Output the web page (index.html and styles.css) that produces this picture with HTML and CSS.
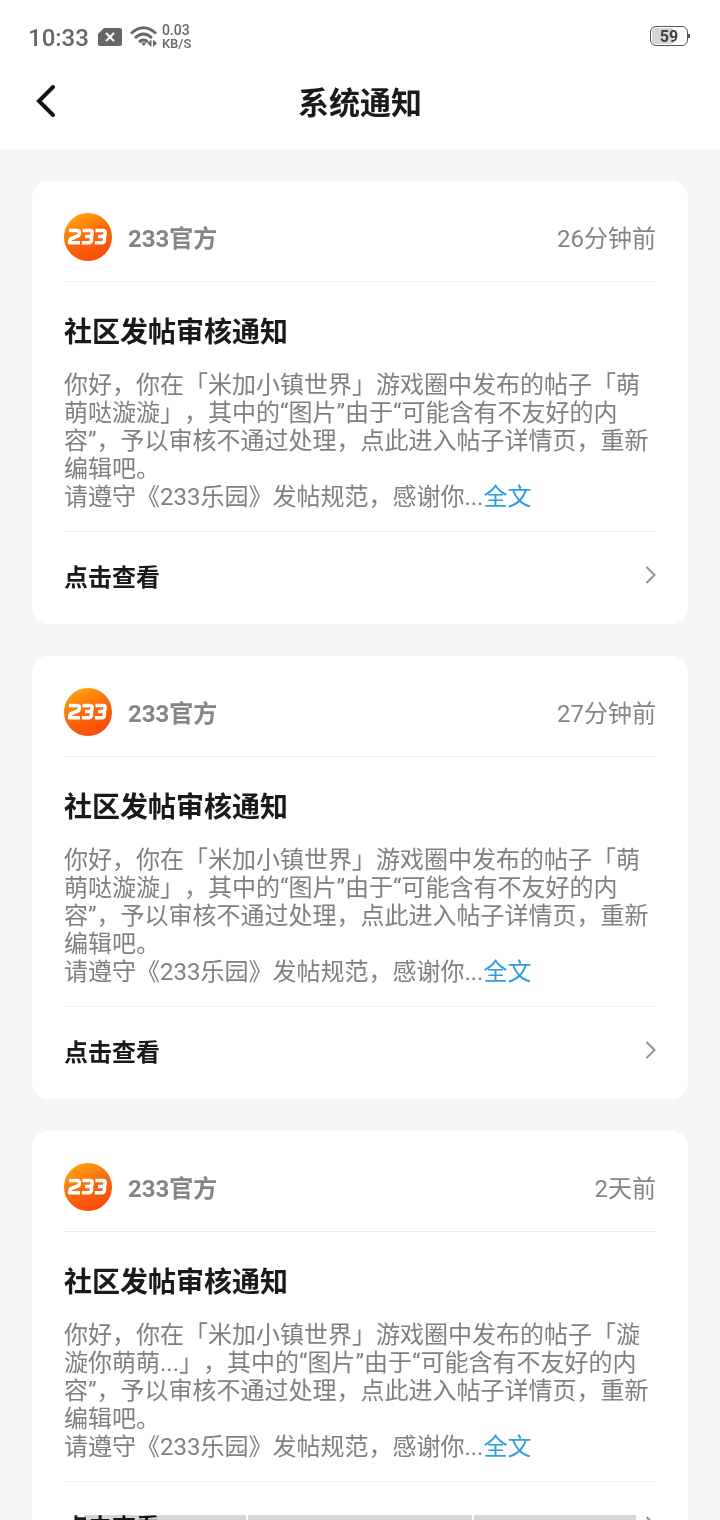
FILE: index.html
```html
<!DOCTYPE html>
<html lang="zh-CN">
<head>
<meta charset="utf-8">
<meta name="viewport" content="width=device-width, initial-scale=1">
<title>系统通知</title>
<link rel="stylesheet" href="styles.css">
</head>
<body>
<svg class="defs" width="0" height="0" aria-hidden="true">
  <defs>
    <linearGradient id="sun" x1="0.2" y1="0" x2="0.7" y2="1">
      <stop offset="0" stop-color="#ffa80f"/>
      <stop offset="0.5" stop-color="#fb6a0c"/>
      <stop offset="1" stop-color="#f9480a"/>
    </linearGradient>
    <symbol id="logo" viewBox="0 0 48 48">
      <circle cx="24" cy="24" r="24" fill="url(#sun)"/>
      <g fill="none" stroke="#fff" stroke-width="3.600" stroke-linejoin="round">
        <path d="M5 17.500H13q2.500 0 2.300 2.300l-.1 1.200q-.2 1.600-2 2.200L7.500 25.500q-1.700.7-1.900 4.300H16"/>
        <path d="M18.500 17.500h7.500q2.300 0 2.100 2.200l-.1 1.400q-.2 2.400-2.500 2.400H21M25.500 23.500q2.200 0 2 2.300l-.1 1.600q-.2 2.400-2.600 2.400h-7"/>
        <path d="M31.500 17.500h7.500q2.300 0 2.100 2.200l-.1 1.400q-.2 2.400-2.500 2.400H34M38.500 23.500q2.200 0 2 2.300l-.1 1.600q-.2 2.400-2.600 2.400h-7"/>
      </g>
    </symbol>
    <symbol id="next" viewBox="0 0 12 20">
      <path d="M2.500 2l8 8-8 8" fill="none" stroke="#929292" stroke-width="2"/>
    </symbol>
  </defs>
</svg>
<div class="app">
  <header class="top">
    <div class="status">
      <span class="clock">10:33</span>
      <svg class="sim" viewBox="0 0 24 18" aria-hidden="true">
        <path d="M6 0h16q2 0 2 2v14q0 2-2 2H2q-2 0-2-2V6z" fill="#666"/>
        <path d="M8 5l8 8M16 5l-8 8" stroke="#fff" stroke-width="2"/>
      </svg>
      <svg class="wifi" viewBox="0 0 28 22" aria-hidden="true">
        <g fill="none" stroke="#666" stroke-width="2.700">
          <path d="M1 7.500q12.500-11.500 25 0"/>
          <path d="M5 12q8.500-8 17 0"/>
          <path d="M9 16q4.500-4 9 0"/>
        </g>
        <path d="M11 16.500h5.500l-2.700 3.500zM21.500 13.500v7.500l-4-3.700zM23 13.500v7.500l4-3.700z" fill="#666"/>
      </svg>
      <span class="speed"><span class="rate">0.03</span><span>KB/S</span></span>
      <span class="battery">59</span>
    </div>
    <nav class="bar">
      <button class="back" type="button" aria-label="返回">
        <svg viewBox="0 0 20 32" aria-hidden="true"><path d="M17 2L3 16l14 14" fill="none" stroke="#151515" stroke-width="4" stroke-linecap="round"/></svg>
      </button>
      <h1 class="heading">系统通知</h1>
    </nav>
  </header>
  <main class="list">
    <article class="card">
      <div class="sender">
        <svg class="avatar" aria-hidden="true"><use href="#logo"/></svg>
        <span class="name">233官方</span>
        <time class="time">26分钟前</time>
      </div>
      <div class="content">
        <h2 class="title">社区发帖审核通知</h2>
        <p class="text">你好，你在「米加小镇世界」游戏圈中发布的帖子「萌萌哒漩漩」，其中的“图片”由于“可能含有不友好的内容”，予以审核不通过处理，点此进入帖子详情页，重新编辑吧。<br>请遵守《233乐园》发帖规范，感谢你...<a class="more" href="#">全文</a></p>
      </div>
      <a class="view" href="#"><span>点击查看</span><svg class="next" aria-hidden="true"><use href="#next"/></svg></a>
    </article>
    <article class="card">
      <div class="sender">
        <svg class="avatar" aria-hidden="true"><use href="#logo"/></svg>
        <span class="name">233官方</span>
        <time class="time">27分钟前</time>
      </div>
      <div class="content">
        <h2 class="title">社区发帖审核通知</h2>
        <p class="text">你好，你在「米加小镇世界」游戏圈中发布的帖子「萌萌哒漩漩」，其中的“图片”由于“可能含有不友好的内容”，予以审核不通过处理，点此进入帖子详情页，重新编辑吧。<br>请遵守《233乐园》发帖规范，感谢你...<a class="more" href="#">全文</a></p>
      </div>
      <a class="view" href="#"><span>点击查看</span><svg class="next" aria-hidden="true"><use href="#next"/></svg></a>
    </article>
    <article class="card">
      <div class="sender">
        <svg class="avatar" aria-hidden="true"><use href="#logo"/></svg>
        <span class="name">233官方</span>
        <time class="time">2天前</time>
      </div>
      <div class="content">
        <h2 class="title">社区发帖审核通知</h2>
        <p class="text">你好，你在「米加小镇世界」游戏圈中发布的帖子「漩漩你萌萌...」，其中的“图片”由于“可能含有不友好的内容”，予以审核不通过处理，点此进入帖子详情页，重新编辑吧。<br>请遵守《233乐园》发帖规范，感谢你...<a class="more" href="#">全文</a></p>
      </div>
      <a class="view" href="#"><span>点击查看</span><svg class="next" aria-hidden="true"><use href="#next"/></svg></a>
    </article>
  </main>
  <div class="gestures" aria-hidden="true"><i></i><i></i><i></i></div>
</div>
</body>
</html>
```

FILE: styles.css
```css
* {
  box-sizing: border-box;
}

body {
  margin: 0;
  background: #f5f5f7;
  font-family: Roboto, "Noto Sans CJK SC", sans-serif;
  font-size: 24px;
  color: #1a1a1a;
  text-spacing-trim: space-all;
}

h1, h2, p {
  margin: 0;
}

a {
  color: inherit;
  text-decoration: none;
}

.defs {
  position: absolute;
}

.app {
  position: relative;
  display: flex;
  flex-direction: column;
  height: 100vh;
  overflow: hidden;
}

.top {
  flex: none;
  background: #fff;
}

.status {
  display: flex;
  align-items: center;
  height: 56px;
  padding: 18px 32px 0 28px;
  color: #666;
}

.clock {
  padding-top: 2px;
  font-size: 24px;
  font-weight: 500;
  line-height: 38px;
}

.sim {
  width: 24px;
  height: 18px;
  margin-left: 9px;
}

.wifi {
  width: 28px;
  height: 22px;
  margin-left: 8px;
}

.speed {
  display: flex;
  flex-direction: column;
  margin-left: 4px;
  font-size: 13px;
  font-weight: 500;
  line-height: 13px;
}

.rate {
  font-size: 14px;
}

.battery {
  position: relative;
  width: 38px;
  height: 20px;
  margin-bottom: 2px;
  margin-left: auto;
  border: 1px solid #555;
  border-radius: 6px;
  background: linear-gradient(90deg, #d4d4d4 60%, #fff 60%);
  box-shadow: inset 0 0 0 1px #fff;
  color: #444;
  font-size: 16px;
  font-weight: 700;
  line-height: 20px;
  text-align: center;
}

.battery::after {
  content: "";
  position: absolute;
  top: 7px;
  right: -3px;
  width: 2px;
  height: 4px;
  background: #555;
}

.bar {
  display: grid;
  grid-template-columns: 60px 1fr 60px;
  align-items: center;
  height: 93px;
  padding: 0 16px;
}

.back {
  display: flex;
  align-items: center;
  height: 60px;
  padding: 0 0 4px 20px;
  border: 0;
  background: none;
}

.back svg {
  width: 20px;
  height: 32px;
}

.heading {
  padding-top: 2px;
  font-size: 31px;
  font-weight: 700;
  line-height: 44px;
  text-align: center;
}

.list {
  flex: 1;
  min-height: 0;
  display: flex;
  flex-direction: column;
  gap: 32px;
  padding: 32px;
  overflow-y: auto;
  scrollbar-width: none;
}

.card {
  flex: none;
  padding: 32px 32px 0;
  border-radius: 16px;
  background: #fff;
}

.sender {
  display: flex;
  align-items: center;
  gap: 16px;
  padding-bottom: 20px;
  border-bottom: 1px solid #ececee;
  color: #858585;
  line-height: 34px;
}

.avatar {
  flex: none;
  width: 48px;
  height: 48px;
}

.name,
.time {
  padding-top: 4px;
}

.name {
  font-weight: 700;
}

.time {
  margin-left: auto;
}

.content {
  padding: 31px 0 20px;
  border-bottom: 1px solid #ececee;
}

.title {
  font-size: 28px;
  font-weight: 700;
  line-height: 40px;
}

.text {
  margin-top: 18px;
  color: #808080;
  line-height: 28px;
}

.more {
  color: #2d9fe0;
}

.view {
  display: flex;
  align-items: center;
  justify-content: space-between;
  height: 92px;
  padding-bottom: 6px;
  font-weight: 700;
}

.next {
  width: 12px;
  height: 20px;
}

.gestures {
  position: absolute;
  right: 84px;
  bottom: 0;
  left: 84px;
  display: grid;
  grid-template-columns: 162fr 224fr 162fr;
  gap: 2px;
  height: 5px;
  mix-blend-mode: multiply;
}

.gestures i {
  background: #d6d6d6;
}
```
